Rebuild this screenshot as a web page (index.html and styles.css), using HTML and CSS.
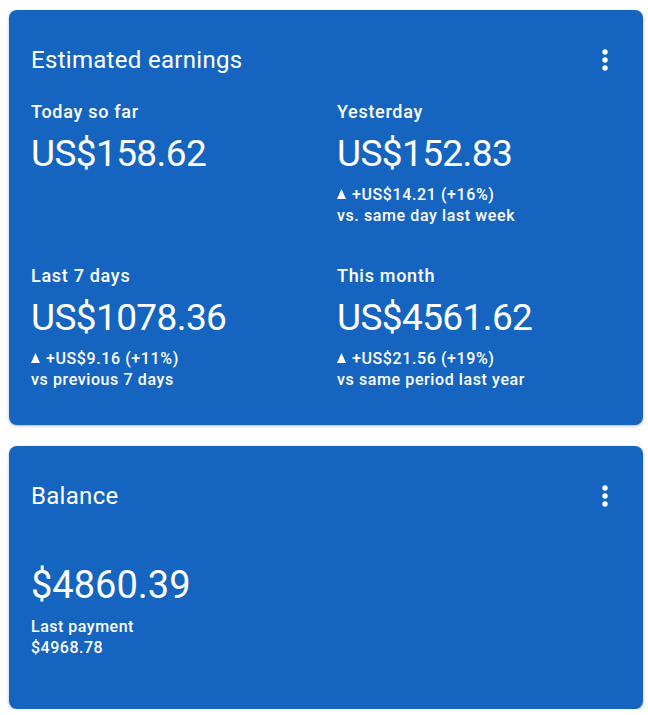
FILE: index.html
```html
<!DOCTYPE html>
<html lang="en">
<head>
    <meta charset="UTF-8">
    <meta name="viewport" content="width=device-width, initial-scale=1.0">
    <title>Earnings</title>

    <link rel="stylesheet" href="styles.css">
</head>
<body>
  <div class="card">
    <div class="card-head">
      <h2 class="card-title">Estimated earnings</h2>
      <button class="more" aria-label="More options">
        <svg width="8" height="24" viewBox="0 0 8 24"><circle cx="4" cy="4" r="2.7"/><circle cx="4" cy="12" r="2.7"/><circle cx="4" cy="20" r="2.7"/></svg>
      </button>
    </div>

    <div class="stats">
      <div class="stat">
        <div class="stat-label">Today so far</div>
        <div class="stat-value">US$158.62</div>
      </div>

      <div class="stat">
        <div class="stat-label">Yesterday</div>
        <div class="stat-value">US$152.83</div>
        <div class="stat-change"><svg class="up" viewBox="0 0 9 10"><polygon points="4.5,0 9,10 0,10"/></svg>+US$14.21 (+16%)<br>vs. same day last week</div>
      </div>

      <div class="stat">
        <div class="stat-label">Last 7 days</div>
        <div class="stat-value">US$1078.36</div>
        <div class="stat-change"><svg class="up" viewBox="0 0 9 10"><polygon points="4.5,0 9,10 0,10"/></svg>+US$9.16 (+11%)<br>vs previous 7 days</div>
      </div>

      <div class="stat">
        <div class="stat-label">This month</div>
        <div class="stat-value">US$4561.62</div>
        <div class="stat-change"><svg class="up" viewBox="0 0 9 10"><polygon points="4.5,0 9,10 0,10"/></svg>+US$21.56 (+19%)<br>vs same period last year</div>
      </div>
    </div>
  </div>

  <div class="card balance">
    <div class="card-head">
      <h2 class="card-title">Balance</h2>
      <button class="more" aria-label="More options">
        <svg width="8" height="24" viewBox="0 0 8 24"><circle cx="4" cy="4" r="2.7"/><circle cx="4" cy="12" r="2.7"/><circle cx="4" cy="20" r="2.7"/></svg>
      </button>
    </div>
    <div class="balance-value">$4860.39</div>
    <div class="balance-last">Last payment<br>$4968.78</div>
  </div>
</body>
</html>
```

FILE: styles.css
```css
body {
    font-family: Roboto, "Liberation Sans", sans-serif;
    background-color: #fff;
    margin: 0;
    padding: 10px 5px 0 9px;
}

.card {
    background-color: #1565c0;
    color: #fff;
    border-radius: 8px;
    padding: 34px 22px 35px 22px;
    box-shadow: 0 1px 3px rgba(0, 0, 0, 0.3);
}

.card-head {
    display: flex;
    justify-content: space-between;
    align-items: center;
}

.card-title {
    margin: 0;
    font-size: 24px;
    line-height: 32px;
    font-weight: 400;
    letter-spacing: 0.3px;
}

.more {
    background: none;
    border: none;
    padding: 0;
    margin-right: 12px;
    fill: #fff;
    display: flex;
    cursor: pointer;
}

.stats {
    display: grid;
    grid-template-columns: 1fr 1fr;
    column-gap: 22px;
    row-gap: 38px;
    margin-top: 24px;
}

.stat-label {
    font-size: 18px;
    line-height: 24px;
    font-weight: 500;
    letter-spacing: 0.7px;
}

.stat-value {
    font-size: 37px;
    line-height: 44px;
    letter-spacing: -0.6px;
    margin-top: 8px;
}

.stat-change {
    font-size: 16px;
    line-height: 21px;
    font-weight: 500;
    letter-spacing: 0.6px;
    margin-top: 8px;
}

.up {
    width: 9px;
    height: 10px;
    fill: #fff;
    vertical-align: 1px;
    margin-right: 6px;
}

.balance {
    margin-top: 21px;
    padding-bottom: 51px;
}

.balance-value {
    font-size: 38px;
    line-height: 44px;
    margin-top: 51px;
}

.balance-last {
    font-size: 16px;
    line-height: 21px;
    font-weight: 500;
    letter-spacing: 0.5px;
    margin-top: 9px;
}
```
